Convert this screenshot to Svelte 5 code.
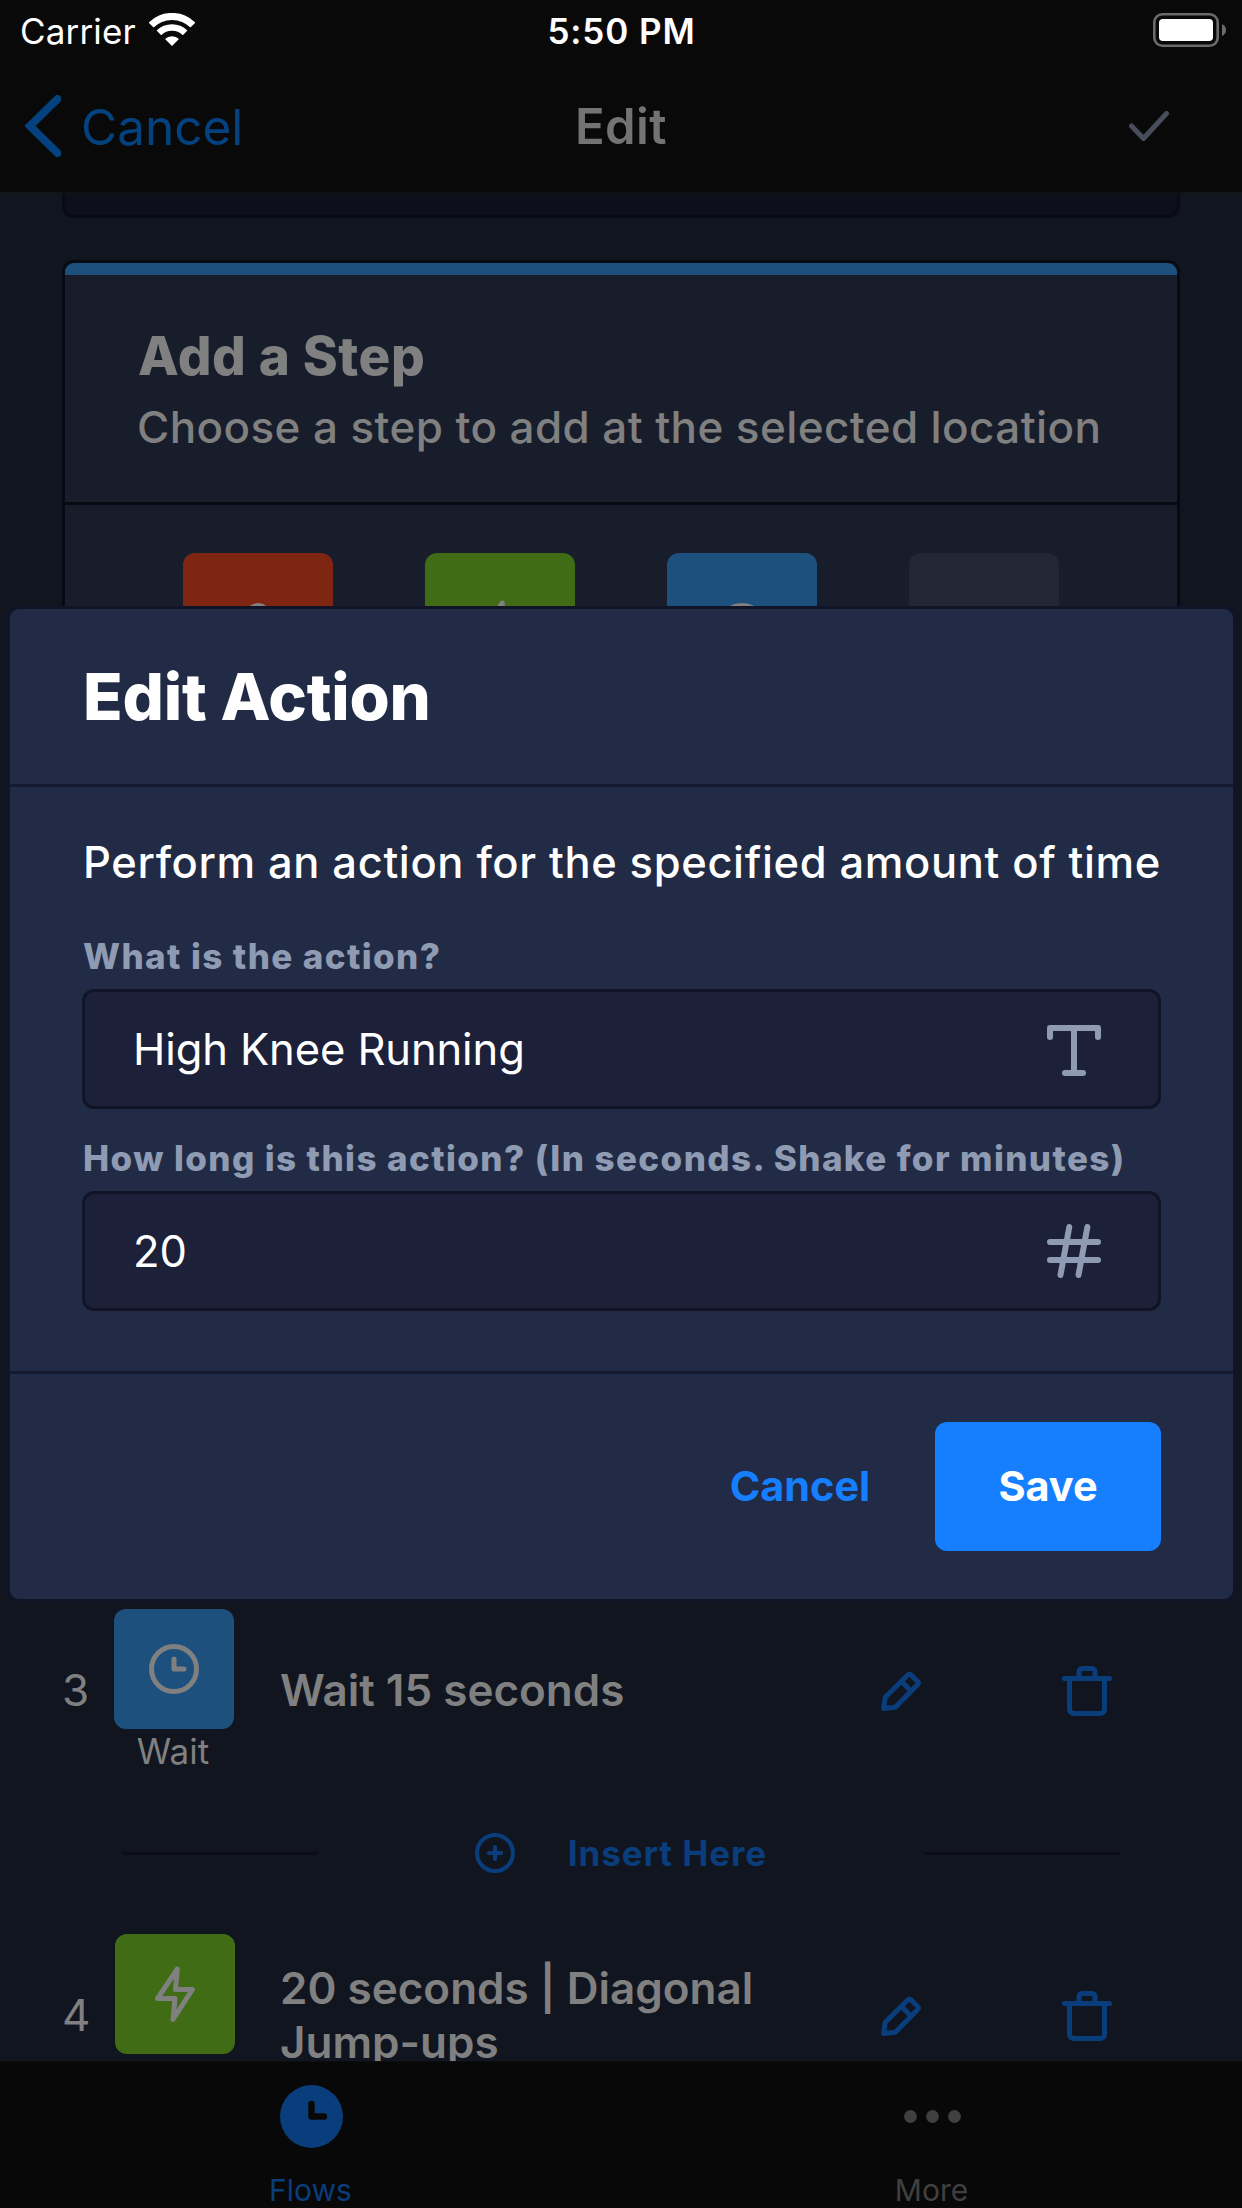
<script>
  const tools = ['voice', 'action', 'wait', 'empty'];
  const steps = [
    { number: 3, kind: 'wait', label: 'Wait', title: 'Wait 15 seconds' },
    { number: 4, kind: 'action', label: '', title: '20 seconds | Diagonal Jump-ups' }
  ];
  let action = $state('High Knee Running');
  let seconds = $state('20');
</script>

{#snippet stepIcon(kind)}
  {#if kind === 'wait'}
    <svg class="line" width="50" height="50" viewBox="0 0 50 50"><circle cx="25" cy="25" r="22.5" /><path d="M25 15V25H35" /></svg>
  {:else if kind === 'action'}
    <svg class="line" width="40" height="56" viewBox="0 0 40 56"><path d="M22.3 3L2.6 32.4H20L18 53.5L37.4 23.5H20.5Z" /></svg>
  {:else if kind === 'voice'}
    <svg class="line" width="40" height="50" viewBox="0 0 40 50"><rect x="9.5" y="2.5" width="21" height="29" rx="10.5" /><path d="M2.5 22a17.5 17.5 0 0 0 35 0M20 40v8" /></svg>
  {/if}
{/snippet}

<div class="screen">
  <header class="status">
    <div class="carrier">
      <span>Carrier</span>
      <svg width="46" height="33" viewBox="0 0 46 33" fill="none" stroke="#fff">
        <path stroke-width="7" d="M2.1 12.1A29.5 29.5 0 0 1 43.9 12.1" />
        <path stroke-width="6.5" d="M9.9 19.9A18.5 18.5 0 0 1 36.1 19.9" />
        <path fill="#fff" stroke="none" d="M23 33L16 26A10 10 0 0 1 30 26Z" />
      </svg>
    </div>
    <span class="time">5:50 PM</span>
    <svg class="battery" width="73" height="34" viewBox="0 0 73 34">
      <rect x="1.3" y="1.3" width="63.4" height="31.4" rx="8" fill="none" stroke="#6b6b6b" stroke-width="2.6" />
      <rect x="6" y="6" width="54" height="22" rx="4" fill="#fff" />
      <path d="M69 11Q73 13 73 17T69 23Z" fill="#6b6b6b" />
    </svg>
  </header>

  <nav class="nav">
    <div class="back">
      <svg width="36" height="62" viewBox="0 0 36 62"><path d="M32.5 4L5 31L32.5 58" fill="none" stroke="#04427f" stroke-width="8" stroke-linecap="round" /></svg>
      <span>Cancel</span>
    </div>
    <h1>Edit</h1>
    <svg class="check" width="40" height="30" viewBox="0 0 40 30"><path d="M2.5 15L14.5 27.5L37.5 2.5" /></svg>
  </nav>

  <main>
    <div class="field-end"></div>
    <section class="card">
      <div class="accent"></div>
      <div class="card-head">
        <h2>Add a Step</h2>
        <p>Choose a step to add at the selected location</p>
      </div>
      <div class="tools">
        {#each tools as kind}
          <div class="tool {kind}">{@render stepIcon(kind)}</div>
        {/each}
      </div>
    </section>

    {#each steps as step, i}
      {#if i > 0}
        <div class="insert">
          <i></i>
          <div class="insert-label">
            <svg width="40" height="40" viewBox="0 0 40 40"><circle cx="20" cy="20" r="18" /><path d="M20 14V26M14 20H26" /></svg>
            <span>Insert Here</span>
          </div>
          <i></i>
        </div>
      {/if}
      <div class="step">
        <span class="number">{step.number}</span>
        <div class="badge" class:unlabelled={!step.label}>
          <div class="badge-tile {step.kind}">{@render stepIcon(step.kind)}</div>
          {#if step.label}<span>{step.label}</span>{/if}
        </div>
        <div class="title">{step.title}</div>
        <svg class="tap" width="40" height="40" viewBox="0 0 40 40"><path d="M2.6 37.4L4.2 26.3L27 3.8Q28.5 2.3 30 3.8L36.7 10.5Q38 12 36.7 13.5L14.3 36.2ZM20.5 10.5L30 20" /></svg>
        <svg class="tap" width="50" height="50" viewBox="0 0 50 50"><path d="M2.5 12.5H47.5M17 12.5V6Q17 2.5 20.5 2.5H29.5Q33 2.5 33 6V12.5M7.5 12.5V42.5Q7.5 47.5 12.5 47.5H37.5Q42.5 47.5 42.5 42.5V12.5" /></svg>
      </div>
    {/each}
  </main>

  <footer class="tabs">
    <div class="tab active">
      <svg width="63" height="63" viewBox="0 0 63 63"><circle cx="31.5" cy="31.5" r="31.5" fill="#0a3d7c" /><path d="M31.5 19V31.5H44" fill="none" stroke="#080808" stroke-width="6.4" stroke-linecap="round" stroke-linejoin="round" /></svg>
      <span>Flows</span>
    </div>
    <div class="tab">
      <svg width="63" height="63" viewBox="0 0 63 63" fill="#404040"><circle cx="9.5" cy="31.5" r="6.4" /><circle cx="31.5" cy="31.5" r="6.4" /><circle cx="53.5" cy="31.5" r="6.4" /></svg>
      <span>More</span>
    </div>
  </footer>

  <div class="modal" role="dialog">
    <h2>Edit Action</h2>
    <div class="modal-body">
      <p>Perform an action for the specified amount of time</p>
      <label for="action">What is the action?</label>
      <div class="input">
        <input id="action" bind:value={action} />
        <svg width="54" height="54" viewBox="0 -3 54 54"><path d="M3 12V3H51V12M27 3V48M18 48H36" /></svg>
      </div>
      <label class="second" for="seconds">How long is this action? (In seconds. Shake for minutes)</label>
      <div class="input">
        <input id="seconds" bind:value={seconds} />
        <svg width="54" height="54" viewBox="0 0 54 54"><path d="M3 18H51M3 36H51M22.3 3L13.5 51M40.4 3L31.5 51" /></svg>
      </div>
    </div>
    <div class="actions">
      <button class="cancel">Cancel</button>
      <button class="save">Save</button>
    </div>
  </div>
</div>

<style>
  :global(body) { background: #111520; }
  * { box-sizing: border-box; }
  h1, h2, p { margin: 0; white-space: nowrap; }
  svg { display: block; flex: none; }
  .screen {
    position: relative;
    width: 1242px;
    height: 2208px;
    display: flex;
    flex-direction: column;
    overflow: hidden;
    background: #111520;
    color: #808080;
    font-family: Inter, "Liberation Sans", sans-serif;
  }
  .status, .nav {
    display: grid;
    grid-template-columns: 1fr auto 1fr;
    align-items: center;
    background: #090909;
  }
  .status { height: 62px; padding: 0 16px 0 20px; color: #fff; font-size: 35px; }
  .carrier { display: flex; align-items: center; gap: 13px; letter-spacing: .15px; }
  .carrier svg { margin-top: -3px; }
  .time { font-weight: 600; letter-spacing: .9px; margin-right: 3px; }
  .battery, .check { justify-self: end; }
  .battery { margin-top: -2px; }
  .nav { height: 131px; padding: 0 73px 2px 25px; border-bottom: 1px solid #131313; }
  .back { display: flex; align-items: center; gap: 20px; color: #04427f; font-size: 49.5px; }
  .back span { margin-top: 2px; }
  .nav h1 { font-size: 49px; font-weight: 600; letter-spacing: .4px; color: #737373; margin-left: 48px; }
  .check path { fill: none; stroke: #474d59; stroke-width: 5; stroke-linecap: round; stroke-linejoin: round; }

  main { height: 1868px; padding: 0 62px; overflow: hidden; }
  .field-end { height: 25px; border: 3px solid #080a14; border-top: 0; border-radius: 0 0 12px 12px; background: #0d0f1b; }
  .card { height: 1200px; margin: 42px 0 149px; border: 3px solid #070913; border-radius: 12px; background: #181d2c; overflow: hidden; }
  .accent { height: 12px; background: #1e507e; }
  .card-head { height: 230px; padding: 50px 73px 0; border-bottom: 3px solid #070913; }
  .card-head h2 { font-size: 53px; line-height: 62px; font-weight: 800; letter-spacing: .6px; }
  .card-head p { margin: 10px 0 0 -1px; font-size: 44px; line-height: 60px; font-weight: 500; letter-spacing: .4px; }
  .tools { display: flex; gap: 92px; padding: 48px 118px; }
  .tool { width: 150px; height: 150px; border-radius: 12px; }
  .tool, .badge-tile { display: grid; place-items: center; }
  .line { fill: none; stroke: #808080; stroke-width: 5; stroke-linecap: round; stroke-linejoin: round; }
  .voice { background: #7e2612; }
  .action { background: #406c15; }
  .wait { background: #1e507e; }
  .empty { background: #222736; }

  .step { height: 162px; display: grid; grid-template-columns: 52px 120px 46px 601px 181px 50px; align-items: center; }
  .number { font-size: 44px; }
  .badge { width: 120px; height: 162px; text-align: center; font-size: 35px; line-height: 44px; }
  .badge-tile { height: 120px; border-radius: 12px; }
  .badge span { margin-left: -2px; }
  .unlabelled { margin-left: 1px; }
  .title { grid-column: 4; width: 500px; font-size: 44px; line-height: 54px; font-weight: 600; }
  .tap, .insert svg { fill: none; stroke: #0a3d7c; stroke-width: 5; stroke-linecap: round; stroke-linejoin: round; }
  .tap { margin-top: 2px; }
  .insert { height: 163px; padding: 1px 60px 0; display: flex; align-items: center; justify-content: space-between; }
  .insert i { width: 196px; height: 3px; background: #0b0c18; }
  .insert-label { display: flex; align-items: center; gap: 53px; color: #0a3d7c; font-size: 35px; font-weight: 700; letter-spacing: .9px; }
  .insert svg { stroke-width: 4; }

  .tabs { flex: 1; display: grid; grid-template-columns: 1fr 1fr; background: #080808; border-top: 1px solid #0e0e0e; }
  .tab { display: flex; flex-direction: column; align-items: center; padding-top: 23px; color: #404040; font-size: 30px; line-height: 36px; }
  .tab svg { margin-left: 2px; }
  .tab span { margin-top: 24px; }
  .tab.active { color: #0a3d7c; }

  .modal { position: absolute; left: 10px; top: 609px; width: 1223px; height: 990px; border-radius: 9px; background: #222b45; box-shadow: 0 0 0 3px #101426; color: #fff; }
  .modal > h2 { height: 178px; padding-left: 73px; border-bottom: 3px solid #151a30; font-size: 65px; line-height: 175px; font-weight: 800; letter-spacing: -.2px; }
  .modal-body { height: 587px; padding: 45px 72px 0; border-bottom: 3px solid #151a30; }
  .modal-body p { padding-left: 1px; font-size: 43.5px; line-height: 60px; font-weight: 500; letter-spacing: .63px; }
  label { display: block; margin: 43px 0 11px; padding-left: 1px; color: #8f9bb3; font-size: 35px; line-height: 43px; font-weight: 800; letter-spacing: 1.4px; white-space: nowrap; }
  label.second { margin: 28px 0 11px; }
  .input { height: 120px; display: flex; align-items: center; padding: 0 57px 0 48px; border: 3px solid #101426; border-radius: 12px; background: #1c2039; }
  input { flex: 1; min-width: 0; padding: 0; border: 0; outline: 0; background: none; color: #fff; font: 400 43.5px Inter, "Liberation Sans", sans-serif; letter-spacing: -.1px; }
  .input svg { fill: none; stroke: #8f9bb3; stroke-width: 6; stroke-linecap: round; stroke-linejoin: round; }
  .actions { display: flex; justify-content: flex-end; padding: 48px 72px 0; }
  button { height: 129px; border: 0; border-radius: 12px; padding: 0 0 2px; background: none; font: 700 41.4px Inter, "Liberation Sans", sans-serif; }
  .cancel { width: 270px; color: #157fff; }
  .save { width: 226px; background: #157fff; color: #fff; }
</style>
